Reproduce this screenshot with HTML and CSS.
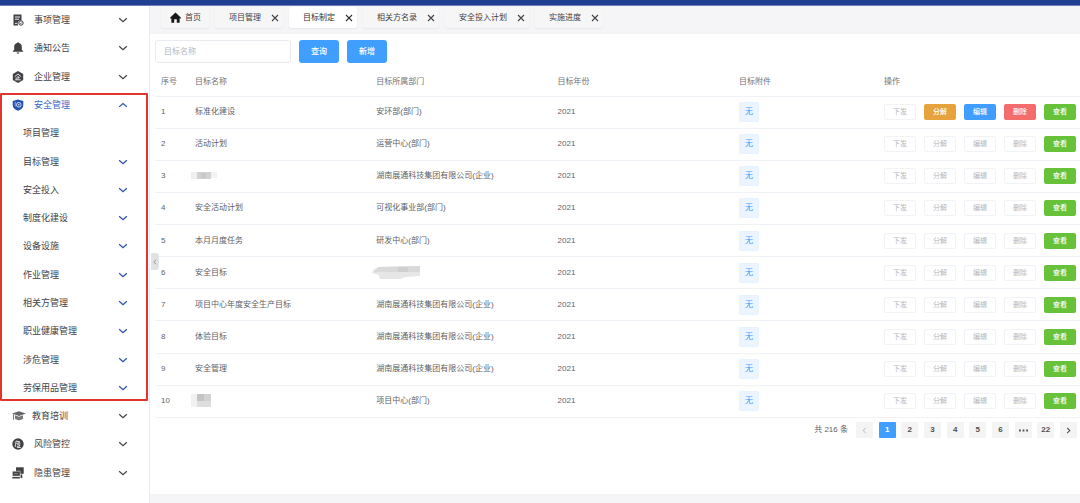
FILE: index.html
```html
<!DOCTYPE html>
<html lang="zh-CN">
<head>
<meta charset="utf-8">
<title>目标制定</title>
<link rel="stylesheet" href="styles.css">
</head>
<body>
<svg class="defs" width="0" height="0" aria-hidden="true">
  <symbol id="down" viewBox="0 0 10 10"><path d="M1.800 3.500 5 6.400 8.200 3.500" fill="none" stroke="currentColor" stroke-width="1"/></symbol>
  <symbol id="up" viewBox="0 0 10 10"><path d="M1.800 6.600 5 3.700 8.200 6.600" fill="none" stroke="currentColor" stroke-width="1"/></symbol>
  <symbol id="left" viewBox="0 0 10 10"><path d="M6.500 2 3.500 5 6.500 8" fill="none" stroke="currentColor" stroke-width="1"/></symbol>
  <symbol id="right" viewBox="0 0 10 10"><path d="M3.500 2 6.500 5 3.500 8" fill="none" stroke="currentColor" stroke-width="1.200"/></symbol>
  <symbol id="close" viewBox="0 0 10 10"><path d="M2 2 8 8M8 2 2 8" fill="none" stroke="currentColor" stroke-width="1.100"/></symbol>
</svg>
<div class="topbar"></div>
<div class="layout">
  <nav class="sidebar">
    <ul class="menu">
      <li><button class="item" type="button"><svg class="icon" viewBox="0 0 12 12"><path d="M1.500.5h8v6.200a3 3 0 0 0-3.200 4.800H1.500z" fill="#404144"/><path d="M3 3h5M3 5.200h4M3 9.300h2" stroke="#fff" stroke-width=".9"/><circle cx="9" cy="9" r="2.200" fill="#fff" stroke="#404144"/><path d="m8 9 .8.8L10.200 8.300" fill="none" stroke="#404144" stroke-width=".7"/></svg><span>事项管理</span><svg class="arrow"><use href="#down"/></svg></button></li>
      <li><button class="item" type="button"><svg class="icon" viewBox="0 0 12 12"><path d="M6 .2c.6 0 .9.400.9.900C9 1.600 9.800 3 9.800 5v2.600l1.600 2.200H.6l1.600-2.200V5c0-2 .8-3.400 2.900-3.900 0-.5.300-.9.900-.9zM4.300 10.400h3.400L6 12z" fill="#404144"/></svg><span>通知公告</span><svg class="arrow"><use href="#down"/></svg></button></li>
      <li><button class="item" type="button"><svg class="icon" viewBox="0 0 12 12"><path d="m6 0 5.200 3v6L6 12 .8 9V3z" fill="#404144"/><path d="M2.800 5.600 6 3l3.200 2.600M6 4.800v3.800M4.200 6.300v2.300M6 6.600h1.700M3.200 8.800h5.600" fill="none" stroke="#fff" stroke-width=".8"/></svg><span>企业管理</span><svg class="arrow"><use href="#down"/></svg></button></li>
    </ul>
    <ul class="menu menu-open">
      <li><button class="item active" type="button"><svg class="icon" viewBox="0 0 12 12"><path d="M6 .4 11.300 2v4c0 2.800-2 4.800-5.300 5.800C2.700 10.800.7 8.800.7 6V2z" fill="#2450ae"/><path d="M3.200 2.800v4.700" stroke="#a9c0ed" stroke-width=".8"/><circle cx="6.800" cy="5.800" r="2.300" fill="none" stroke="#fff" stroke-width=".8"/><circle cx="6.800" cy="5.800" r=".7" fill="#fff"/></svg><span>安全管理</span><svg class="arrow"><use href="#up"/></svg></button></li>
      <li><button class="item sub" type="button"><span>项目管理</span></button></li>
      <li><button class="item sub" type="button"><span>目标管理</span><svg class="arrow"><use href="#down"/></svg></button></li>
      <li><button class="item sub" type="button"><span>安全投入</span><svg class="arrow"><use href="#down"/></svg></button></li>
      <li><button class="item sub" type="button"><span>制度化建设</span><svg class="arrow"><use href="#down"/></svg></button></li>
      <li><button class="item sub" type="button"><span>设备设施</span><svg class="arrow"><use href="#down"/></svg></button></li>
      <li><button class="item sub" type="button"><span>作业管理</span><svg class="arrow"><use href="#down"/></svg></button></li>
      <li><button class="item sub" type="button"><span>相关方管理</span><svg class="arrow"><use href="#down"/></svg></button></li>
      <li><button class="item sub" type="button"><span>职业健康管理</span><svg class="arrow"><use href="#down"/></svg></button></li>
      <li><button class="item sub" type="button"><span>涉危管理</span><svg class="arrow"><use href="#down"/></svg></button></li>
      <li><button class="item sub" type="button"><span>劳保用品管理</span><svg class="arrow"><use href="#down"/></svg></button></li>
    </ul>
    <ul class="menu">
      <li><button class="item" type="button"><svg class="icon wide" viewBox="0 0 14 12"><path d="M7 1.200 14 3.500 7 6 0 3.500z" fill="#66676a"/><path d="M3 5.300v3.500c2 1.800 6 1.800 8 0V5.300L7 6.800z" fill="#77787b"/><path d="M1.500 4.200v5.600" stroke="#66676a" stroke-width=".9"/></svg><span>教育培训</span><svg class="arrow"><use href="#down"/></svg></button></li>
      <li><button class="item" type="button"><svg class="icon" viewBox="0 0 12 12"><circle cx="6" cy="6" r="5.700" fill="#404144"/><path d="M4.800 2.500 3 4.800M4.500 3.500h3L6.800 5M3.500 5.200h5M3.800 5.200 3.200 9M5.200 6.700h2.500v1.500H5.300v1.300h3.500" fill="none" stroke="#fff" stroke-width=".8"/></svg><span>风险管控</span><svg class="arrow"><use href="#down"/></svg></button></li>
      <li><button class="item" type="button"><svg class="icon" viewBox="0 0 12 12"><path d="M4 .3h7.700v6.500H4z" fill="#404144"/><path d="M.4 4.200h7.800v5H.4z" fill="#404144" stroke="#fff" stroke-width=".5"/><path d="M2 6.700h4" stroke="#aaa" stroke-width=".7"/><path d="M.3 10.700h7.500M9.500 7.500v2.600h-1" fill="none" stroke="#404144" stroke-width="1.600"/></svg><span>隐患管理</span><svg class="arrow"><use href="#down"/></svg></button></li>
    </ul>
  </nav>
  <main class="main">
    <button class="collapse" type="button" aria-label="收起菜单"><svg><use href="#left"/></svg></button>
    <div class="tabs">
      <div class="tab home"><svg class="house" viewBox="0 0 12 12"><path d="M6 .5 12 6.400l-.8.9-.7-.6v5H7.400V8H4.600v3.700H1.500v-5l-.7.600L0 6.400z" fill="#17181a"/></svg><span>首页</span></div>
      <div class="tab"><span>项目管理</span><button type="button" aria-label="关闭"><svg><use href="#close"/></svg></button></div>
      <div class="tab current"><span>目标制定</span><button type="button" aria-label="关闭"><svg><use href="#close"/></svg></button></div>
      <div class="tab"><span>相关方名录</span><button type="button" aria-label="关闭"><svg><use href="#close"/></svg></button></div>
      <div class="tab"><span>安全投入计划</span><button type="button" aria-label="关闭"><svg><use href="#close"/></svg></button></div>
      <div class="tab"><span>实施进度</span><button type="button" aria-label="关闭"><svg><use href="#close"/></svg></button></div>
    </div>
    <form class="search">
      <input type="text" placeholder="目标名称" aria-label="目标名称">
      <button type="button">查询</button>
      <button type="button">新增</button>
    </form>
    <table class="goals">
      <colgroup><col class="c-no"><col class="c-wide"><col class="c-wide"><col class="c-wide"><col><col class="c-ops"></colgroup>
      <thead><tr><th>序号</th><th>目标名称</th><th>目标所属部门</th><th>目标年份</th><th>目标附件</th><th>操作</th></tr></thead>
      <tbody>
        <tr><td>1</td><td>标准化建设</td><td>安环部(部门)</td><td>2021</td><td><span class="tag">无</span></td><td><div class="ops"><button type="button" disabled>下发</button><button type="button" class="orange">分解</button><button type="button" class="blue">编辑</button><button type="button" class="red">删除</button><button type="button" class="green">查看</button></div></td></tr>
        <tr><td>2</td><td>活动计划</td><td>运营中心(部门)</td><td>2021</td><td><span class="tag">无</span></td><td><div class="ops"><button type="button" disabled>下发</button><button type="button" disabled>分解</button><button type="button" disabled>编辑</button><button type="button" disabled>删除</button><button type="button" class="green">查看</button></div></td></tr>
        <tr><td>3</td><td><svg class="mask" width="26" height="8"><path d="M0 0h6v7H0z" fill="#efefef"/><path d="M6 0h14v7H6z" fill="#d2d2d2"/><path d="M10 1h5v5h-5z" fill="#c8c8c8"/><path d="M20 0h6v6h-6z" fill="#f3f3f3"/></svg></td><td>湖南展通科技集团有限公司(企业)</td><td>2021</td><td><span class="tag">无</span></td><td><div class="ops"><button type="button" disabled>下发</button><button type="button" disabled>分解</button><button type="button" disabled>编辑</button><button type="button" disabled>删除</button><button type="button" class="green">查看</button></div></td></tr>
        <tr><td>4</td><td>安全活动计划</td><td>可视化事业部(部门)</td><td>2021</td><td><span class="tag">无</span></td><td><div class="ops"><button type="button" disabled>下发</button><button type="button" disabled>分解</button><button type="button" disabled>编辑</button><button type="button" disabled>删除</button><button type="button" class="green">查看</button></div></td></tr>
        <tr><td>5</td><td>本月月度任务</td><td>研发中心(部门)</td><td>2021</td><td><span class="tag">无</span></td><td><div class="ops"><button type="button" disabled>下发</button><button type="button" disabled>分解</button><button type="button" disabled>编辑</button><button type="button" disabled>删除</button><button type="button" class="green">查看</button></div></td></tr>
        <tr><td>6</td><td>安全目标</td><td><svg class="mask" width="50" height="13"><path d="M2 3 8 1l40-1v10l-14 1-6 2H8L7 9 0 7z" fill="#e6e6e6"/><path d="M6 1 48 0v6H2z" fill="#d9d9d9"/><path d="M26 1h10v5H26z" fill="#cfcfcf"/></svg></td><td>2021</td><td><span class="tag">无</span></td><td><div class="ops"><button type="button" disabled>下发</button><button type="button" disabled>分解</button><button type="button" disabled>编辑</button><button type="button" disabled>删除</button><button type="button" class="green">查看</button></div></td></tr>
        <tr><td>7</td><td>项目中心年度安全生产目标</td><td>湖南展通科技集团有限公司(企业)</td><td>2021</td><td><span class="tag">无</span></td><td><div class="ops"><button type="button" disabled>下发</button><button type="button" disabled>分解</button><button type="button" disabled>编辑</button><button type="button" disabled>删除</button><button type="button" class="green">查看</button></div></td></tr>
        <tr><td>8</td><td>体验目标</td><td>湖南展通科技集团有限公司(企业)</td><td>2021</td><td><span class="tag">无</span></td><td><div class="ops"><button type="button" disabled>下发</button><button type="button" disabled>分解</button><button type="button" disabled>编辑</button><button type="button" disabled>删除</button><button type="button" class="green">查看</button></div></td></tr>
        <tr><td>9</td><td>安全管理</td><td>湖南展通科技集团有限公司(企业)</td><td>2021</td><td><span class="tag">无</span></td><td><div class="ops"><button type="button" disabled>下发</button><button type="button" disabled>分解</button><button type="button" disabled>编辑</button><button type="button" disabled>删除</button><button type="button" class="green">查看</button></div></td></tr>
        <tr><td>10</td><td><svg class="mask" width="20" height="14"><path d="M0 0h6v13H0z" fill="#f1f1f1"/><path d="M6 0h14v13H6z" fill="#dedede"/><path d="M6 0h7v7H6z" fill="#c4c4c4"/><path d="M13 0h7v7h-7z" fill="#d2d2d2"/></svg></td><td>项目中心(部门)</td><td>2021</td><td><span class="tag">无</span></td><td><div class="ops"><button type="button" disabled>下发</button><button type="button" disabled>分解</button><button type="button" disabled>编辑</button><button type="button" disabled>删除</button><button type="button" class="green">查看</button></div></td></tr>
      </tbody>
    </table>
    <div class="pager">
      <span>共 216 条</span>
      <div class="pages">
        <button type="button" disabled aria-label="上一页"><svg><use href="#left"/></svg></button>
        <button type="button" class="on">1</button><button type="button">2</button><button type="button">3</button><button type="button">4</button><button type="button">5</button><button type="button">6</button>
        <button type="button" aria-label="更多"><svg viewBox="0 0 10 10"><path d="M0 4h2v2H0zM4 4h2v2H4zM8 4h2v2H8z" fill="currentColor"/></svg></button>
        <button type="button">22</button>
        <button type="button" aria-label="下一页"><svg><use href="#right"/></svg></button>
      </div>
    </div>
    <div class="footer"></div>
  </main>
</div>
</body>
</html>
```
FILE: styles.css
```css
* { box-sizing: border-box; }
body {
  margin: 0;
  min-height: 100vh;
  display: flex;
  flex-direction: column;
  font-family: "Liberation Sans", "Noto Sans CJK SC", sans-serif;
  font-size: 8px;
  line-height: 12px;
  color: #606266;
  background: #fff;
}
button, input { font: inherit; color: inherit; }
button { padding: 0; border: 0; background: none; white-space: nowrap; }
ul { margin: 0; padding: 0; list-style: none; }
svg { display: block; flex: none; }
.defs { position: absolute; }

.topbar { height: 5px; background: #1f3f93; border-bottom: 1px solid #6d80b8; box-sizing: content-box; }
.layout { flex: 1; display: flex; }

.sidebar { width: 150px; flex: none; border-right: 1px solid #ebebee; }
.menu { display: grid; grid-auto-rows: 1fr; height: 85px; }
.menu-open { position: relative; height: 311px; }
.menu-open::after {
  content: "";
  position: absolute;
  inset: 2px 1px 1px 0;
  border: 2px solid #e3352f;
  border-radius: 1px;
  pointer-events: none;
}
.menu li { display: flex; }
.item {
  flex: 1;
  display: flex;
  align-items: center;
  gap: 10px;
  padding: 0 20px 0 12px;
  font-size: 9px;
  color: #414246;
}
.item.active { color: #3a68c4; }
.item.sub { padding-left: 23px; }
.icon { width: 12px; height: 12px; }
.icon.wide { width: 14px; height: 12px; margin-right: -4px; }
.arrow { width: 12px; height: 12px; margin-left: auto; }
.menu-open .arrow { color: #2450a8; }

.main { flex: 1; min-width: 0; position: relative; display: flex; flex-direction: column; }
.collapse {
  position: absolute;
  top: 247px;
  left: 1px;
  width: 8px;
  height: 17px;
  border-radius: 0 3px 3px 0;
  background: #e2e2e4;
  color: #888;
}
.collapse svg { width: 8px; height: 12px; }

.tabs { display: flex; gap: 6px; padding: 1px 11px 6px; background: #f5f5f7; }
.tab {
  display: flex;
  align-items: center;
  gap: 9px;
  height: 21px;
  padding: 0 4px 0 14px;
  border-radius: 3px;
  background: #f6f6f7;
  color: #414246;
  box-shadow: 0 1px 2px rgba(0, 0, 0, .06);
}
.tab button svg { width: 10px; height: 10px; margin-right: -1px; }
.tab.home { gap: 4px; padding: 0 8px 0 9px; }
.tab.current { background: #fff; color: #303133; }
.house { width: 11px; height: 11px; }

.search { display: flex; gap: 8px; padding: 6px 5px 5px; }
.search input {
  width: 136px;
  height: 23px;
  padding: 0 8px;
  border: 1px solid #e9ebf0;
  border-radius: 3px;
  background: #fff;
}
.search input::placeholder { color: #b4b7be; }
.search button {
  width: 40px;
  height: 23px;
  border-radius: 3px;
  background: #409eff;
  color: #fff;
  font-weight: 500;
}

.goals {
  margin-left: 5px;
  width: calc(100% - 5px);
  height: 350px;
  table-layout: fixed;
  border-collapse: collapse;
}
.c-no { width: 34px; }
.c-wide { width: 19.6%; }
.c-ops { width: 202px; }
.goals th, .goals td {
  padding: 0 0 0 6px;
  border-bottom: 1px solid #f0f2f7;
  text-align: left;
  font-weight: 400;
  white-space: nowrap;
}
.goals th { height: 28px; color: #707379; }
.mask { margin-left: -4px; }
.tag {
  display: inline-block;
  padding: 3px 5px;
  border: 1px solid #e6f2ff;
  border-radius: 2px;
  background: #ecf5ff;
  color: #409eff;
}
.ops { display: flex; gap: 8px; }
.ops button {
  width: 32px;
  height: 16px;
  border-radius: 2px;
  color: #fff;
  font-size: 7px;
  font-weight: 500;
}
.ops button:disabled { border: 1px solid #f1f3f7; color: #b4b7be; font-weight: 400; }
.ops .orange { background: #e6a23c; }
.ops .blue { background: #409eff; }
.ops .red { background: #f56c6c; }
.ops .green { background: #67c23a; }

.pager { display: flex; justify-content: flex-end; align-items: center; gap: 8px; padding: 4px 3px 0 0; }
.pages { display: flex; justify-content: space-between; width: 221px; }
.pages button {
  display: flex;
  align-items: center;
  justify-content: center;
  width: 17px;
  height: 16px;
  border-radius: 1px;
  background: #f4f4f5;
  color: #505256;
  font-weight: 700;
}
.pages button:disabled { color: #b0b3ba; }
.pages .on { background: #409eff; color: #fff; }
.pages svg { width: 9px; height: 9px; }
.footer { height: 9px; margin-top: auto; background: #f5f5f8; }
```
